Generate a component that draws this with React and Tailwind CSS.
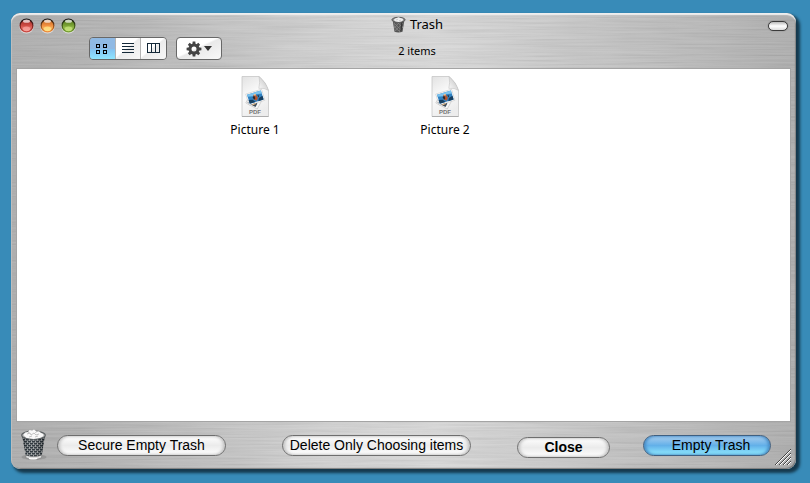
import clsx from 'clsx'

const FILES = ['Picture 1', 'Picture 2']

const LIGHTS = [
  { name: 'Close window', id: 'red', dark: '#982824', mid: '#cf4c44', light: '#f9a29c' },
  { name: 'Minimize', id: 'amber', dark: '#b85f1c', mid: '#f29040', light: '#ffe486' },
  { name: 'Zoom', id: 'green', dark: '#4c6c1a', mid: '#7aa334', light: '#c4e278' },
]

const GEAR_TEETH = [0, 45, 90, 135, 180, 225, 270, 315]

function BrushedMetal() {
  return (
    <svg className="absolute inset-0 h-full w-full" aria-hidden="true">
      <defs>
        <linearGradient id="sheen" x1="0" x2="1" y1="0" y2="0">
          <stop offset="0" stopColor="#acacac" />
          <stop offset="0.14" stopColor="#b4b4b4" />
          <stop offset="0.4" stopColor="#d2d2d2" />
          <stop offset="0.54" stopColor="#dadada" />
          <stop offset="0.75" stopColor="#c4c4c4" />
          <stop offset="1" stopColor="#acacac" />
        </linearGradient>
        <filter id="brush" x="0" y="0" width="100%" height="100%">
          <feTurbulence type="fractalNoise" baseFrequency="0.012 0.55" numOctaves="3" seed="4" />
          <feColorMatrix values="0.9 0 0 0 0.05  0.9 0 0 0 0.05  0.9 0 0 0 0.05  0 0 0 0 0.14" />
        </filter>
      </defs>
      <rect width="100%" height="100%" fill="url(#sheen)" />
      <rect width="100%" height="100%" filter="url(#brush)" />
    </svg>
  )
}

function TrafficLight({ light }) {
  return (
    <button type="button" aria-label={light.name} className="h-4 w-[15px]">
      <svg width="15" height="16" viewBox="0 0 15 16">
        <defs>
          <linearGradient id={`light-${light.id}`} x1="0" x2="0" y1="0" y2="1">
            <stop offset="0" stopColor={light.dark} />
            <stop offset="0.5" stopColor={light.mid} />
            <stop offset="1" stopColor={light.light} />
          </linearGradient>
          <linearGradient id={`rim-${light.id}`} x1="0" x2="0" y1="0" y2="1">
            <stop offset="0" stopColor="#111" />
            <stop offset="0.7" stopColor={light.dark} />
            <stop offset="1" stopColor={light.mid} />
          </linearGradient>
        </defs>
        <circle cx="7.5" cy="8.3" r="7.2" fill="#dcdcdc" />
        <circle cx="7.5" cy="7.5" r="6.4" fill={`url(#light-${light.id})`} stroke={`url(#rim-${light.id})`} strokeWidth="1.3" />
        <ellipse cx="7.5" cy="3.2" rx="3.5" ry="1.6" fill="#fff" opacity="0.7" />
        <ellipse cx="7.5" cy="10.8" rx="3.6" ry="2.3" fill={light.light} opacity="0.8" />
      </svg>
    </button>
  )
}

function ViewButton({ label, active, children }) {
  return (
    <button
      type="button"
      aria-label={label}
      aria-pressed={active}
      className={clsx(
        'flex flex-1 items-center justify-center border-r border-[#b4b4b4] last:border-r-0',
        active
          ? 'bg-linear-to-b from-[#8fb9e4] from-50% via-[#84c4f2] via-55% to-[#8fe6ff]'
          : 'bg-linear-to-br from-white from-45% via-[#ececec] via-50% to-[#f7f7f7]',
      )}
    >
      {children}
    </button>
  )
}

function GearIcon() {
  return (
    <svg width="16" height="16" viewBox="0 0 16 16" fill="#444">
      {GEAR_TEETH.map((angle) => (
        <path key={angle} d="M6.3 4L6.7 .6h2.6L9.7 4z" transform={`rotate(${angle} 8 8)`} />
      ))}
      <circle cx="8" cy="8" r="4" fill="none" stroke="#444" strokeWidth="3" />
    </svg>
  )
}

function SmallTrash() {
  return (
    <svg width="16" height="17" viewBox="0 0 16 17" aria-hidden="true">
      <path d="M1.5 3.5h12l-2 12.2q-4 1.4-8 0z" fill="#555" />
      <path d="M3 7l8 8M3 10l6 6M6 6l6 6M12 7l-8 8M9 6l-6 6M13 9l-5 6" stroke="#8a8a8a" strokeWidth="0.7" />
      <path d="M3 5l1.2 9.5M6 6v9M9 6v9" stroke="#777" strokeWidth="0.7" />
      <path d="M11 5l-1 10" stroke="#333" strokeWidth="1.2" />
      <ellipse cx="7.5" cy="3.8" rx="6.6" ry="2.5" fill="#888" stroke="#5c5c5c" />
      <path d="M2.6 4l1.4-1.4L5.5 2l2-.8 2 .7 2 .5L12.4 4l-2 1.4-2.6.5-3.2-.4z" fill="#eee" />
      <path d="M5 4l2-.8M8 4.8l2-.8" stroke="#bbb" strokeWidth="0.6" />
    </svg>
  )
}

function TrashCan() {
  return (
    <svg width="27" height="32" viewBox="0 0 27 32" aria-hidden="true">
      <defs>
        <pattern id="mesh" width="4" height="4" patternUnits="userSpaceOnUse">
          <rect width="4" height="4" fill="#999d9f" />
          <path d="M0 0h3v1.6H0zM2 2h2v1.6H2zM0 2h1v1.6H0z" fill="#1a242b" />
        </pattern>
        <linearGradient id="canShade">
          <stop offset="0" stopColor="#000" stopOpacity="0.3" />
          <stop offset="0.4" stopColor="#fff" stopOpacity="0.1" />
          <stop offset="1" stopColor="#000" stopOpacity="0.35" />
        </linearGradient>
      </defs>
      <ellipse cx="14" cy="28" rx="12.5" ry="3" fill="#666" opacity="0.3" />
      <path d="M2 6h23l-3.5 22q-8 4-15.5 0z" fill="url(#mesh)" />
      <path d="M2 6h23l-3.5 22q-8 4-15.5 0z" fill="url(#canShade)" />
      <path d="M5.6 26.2q8 3 16.2 0l-.4 2.6q-7.6 3.6-15.3 0z" fill="#ddd" stroke="#777" strokeWidth="0.5" />
      <path d="M9 29.3q4 1.2 8 0" stroke="#fff" strokeWidth="1.4" fill="none" />
      <ellipse cx="13.5" cy="6.2" rx="11.8" ry="4" fill="#bbb" stroke="#5e6365" strokeWidth="1.2" />
      <path d="M3.5 6L5 3.5l3-.6L9.5 1l2.6.6L14 .6l2.5 2 2.6-.4 1.5 1.6L23 5l.4 2-3.6 2-6.2 1-7-1z" fill="#f8f8f8" />
      <path d="M7 5l3-1 1 2 3-2 2 2 3-1M9 8l3-1M15 8l3-1M8 3l1.5 1M16.5 2.6L15.4 4" stroke="#b4b4b4" strokeWidth="0.8" fill="none" />
    </svg>
  )
}

function PdfIcon() {
  return (
    <svg width="30" height="43" viewBox="0 0 30 43" aria-hidden="true">
      <defs>
        <linearGradient id="paper" x1="0" x2="0.4" y1="0" y2="1">
          <stop offset="0" stopColor="#e2e2e2" />
          <stop offset="0.5" stopColor="#fafafa" />
          <stop offset="1" stopColor="#ededed" />
        </linearGradient>
        <linearGradient id="fold" x1="0" x2="1" y1="1" y2="0">
          <stop offset="0" stopColor="#fff" />
          <stop offset="0.55" stopColor="#d8d8d8" />
          <stop offset="1" stopColor="#aaa" />
        </linearGradient>
      </defs>
      <path d="M2 1.5h17q7 6 9.5 14v26H2z" fill="url(#paper)" stroke="#c6c6c6" strokeWidth="0.8" />
      <path d="M2 41.5h26.5" stroke="#a5a5a5" strokeWidth="0.8" />
      <path d="M19 1.5q1.4 6-.2 11.8 5.7-.8 9.7 2.2Q26 7 19 1.5z" fill="url(#fold)" stroke="#bbb" strokeWidth="0.5" />
      <g transform="rotate(28 13 25)">
        <path d="M8 20h13v11H8z" fill="#f6f6f6" stroke="#aaa" strokeWidth="0.4" />
        <path d="M9.5 26h9v4h-9z" fill="#3b4a58" />
      </g>
      <g transform="rotate(-17 15 22)">
        <path d="M7 16.5h16.5v11.5H7z" fill="#fff" stroke="#b5b5b5" strokeWidth="0.4" />
        <path d="M8 17.5h14.5v9.5H8z" fill="#2f80c0" />
        <path d="M8 17.5h14.5v3.2l-5.5-1-4 1-5-1z" fill="#7cc3ee" />
        <path d="M8 23l4 1 2 3H8zM17 27l1.5-3 4-1v4z" fill="#173e60" />
        <path d="M14 19.5h2.4l1.2 4-2 2.6-2.4-2z" fill="#b7552f" />
        <path d="M12.6 21.5l2-.9.4 2.7-1.6 1zM17.8 21l1.6.8-1.2 1.8z" fill="#282a30" />
        <path d="M14.8 19h1.6v1.6h-1.6z" fill="#eecb9b" />
      </g>
      <path d="M12 30l4-1.5" stroke="#e6b884" />
      <text x="15" y="38.6" textAnchor="middle" fontSize="6" fontWeight="bold" fill="#777" fontFamily="Liberation Sans, sans-serif">
        PDF
      </text>
    </svg>
  )
}

function PillButton({ primary, className, children }) {
  return (
    <button
      type="button"
      className={clsx(
        'h-[21px] shrink-0 rounded-full border text-sm leading-[19px] whitespace-nowrap text-black',
        primary
          ? 'border-[#3f5f80] bg-linear-to-b from-[#a9cdee] via-[#62b0e9] via-50% to-[#93edff] shadow-[inset_2px_0_3px_#4a8fc8,inset_-2px_0_3px_#4a8fc8]'
          : 'border-[#6e6e6e] bg-linear-to-b from-white via-[#ebebeb] via-50% to-white shadow-[inset_2px_0_3px_#c4c4c4,inset_-2px_0_3px_#c4c4c4]',
        className,
      )}
    >
      {children}
    </button>
  )
}

export default function App() {
  return (
    <div className="flex h-screen bg-[#388bb8] pt-[13px] pr-[14px] pb-[14px] pl-[11px] font-['Noto_Sans',sans-serif] text-black">
      <div className="relative isolate flex min-w-0 flex-1 flex-col rounded-[9px] shadow-[3px_3px_3px_1px_#15394d]">
        <div className="absolute inset-0 -z-10 overflow-hidden rounded-[9px]">
          <BrushedMetal />
          <div className="absolute inset-0 rounded-[9px] shadow-[inset_0_2px_1px_#eeeeee,inset_1px_0_1px_#b8b8b8,inset_-1px_-1px_1px_#777777]" />
        </div>

        {/* Title bar and toolbar */}
        <header className="grid h-14 shrink-0 grid-cols-[1fr_auto_1fr] pl-[27px]">
          <div className="-ml-[19px] flex flex-col gap-[3px] pt-[5px]">
            <div className="flex gap-[6px]">
              {LIGHTS.map((light) => (
                <TrafficLight key={light.id} light={light} />
              ))}
            </div>
            <div className="flex gap-[9px] pl-[70px]">
              <div className="flex h-[23px] w-[78px] overflow-hidden rounded-[4px] border border-[#686868]">
                <ViewButton label="Icon view" active>
                  <svg width="12" height="10" fill="none" stroke="#000" shapeRendering="crispEdges">
                    <path d="M.5.5h3v3h-3zM7.5.5h3v3h-3zM.5 6.5h3v3h-3zM7.5 6.5h3v3h-3z" strokeWidth="1.2" />
                  </svg>
                </ViewButton>
                <ViewButton label="List view">
                  <svg width="12" height="11" stroke="#142838" shapeRendering="crispEdges">
                    <path d="M0 .5h12M0 3.5h12M0 6.5h12M0 9.5h12" />
                  </svg>
                </ViewButton>
                <ViewButton label="Column view">
                  <svg width="14" height="11" fill="none" stroke="#142838" shapeRendering="crispEdges">
                    <path d="M.5.5h12v9H.5zM4.5 0v10M8.5 0v10" />
                  </svg>
                </ViewButton>
              </div>
              <button
                type="button"
                aria-label="Actions"
                className="flex h-[23px] w-[46px] items-center justify-center gap-[2px] rounded-[4px] border border-[#686868] bg-linear-to-br from-white from-45% via-[#e9e9e9] via-50% to-[#f8f8f8]"
              >
                <GearIcon />
                <svg width="8" height="5" fill="#333">
                  <path d="M0 0h8L4 5z" />
                </svg>
              </button>
            </div>
          </div>

          <div className="flex flex-col items-center gap-[11px] pt-[2px]">
            <h1 className="flex items-center gap-[3px] text-[13px] leading-[18px]">
              <SmallTrash />
              Trash
            </h1>
            <p className="text-[11px] leading-[14px]">2 items</p>
          </div>

          <div className="flex items-start justify-end pt-2 pr-2">
            <button
              type="button"
              aria-label="Toggle toolbar"
              className="h-[10px] w-5 rounded-full border border-[#3a3a3a] bg-linear-to-b from-[#bbb] via-white to-[#ddd] shadow-[0_0_1px_#555555]"
            />
          </div>
        </header>

        {/* Files */}
        <main className="mx-[6px] min-h-0 flex-1 bg-white shadow-[0_0_0_1px_#a4a4a4]">
          <ul className="flex pt-[6px] pl-[143px]">
            {FILES.map((file) => (
              <li key={file} className="flex w-[190px] flex-col items-center text-xs leading-4">
                <PdfIcon />
                <span className="pt-1">{file}</span>
              </li>
            ))}
          </ul>
        </main>

        {/* Actions */}
        <footer className="relative flex h-12 shrink-0 items-center justify-between pr-[25px] pl-[9px] font-['Liberation_Sans',sans-serif]">
          <div className="flex items-center gap-14">
            <div className="flex items-center gap-[10px]">
              <TrashCan />
              <PillButton className="w-[169px]">Secure Empty Trash</PillButton>
            </div>
            <PillButton className="w-[189px]">Delete Only Choosing items</PillButton>
          </div>
          <div className="flex items-center gap-[33px]">
            <PillButton className="mt-1 w-[93px] font-bold">Close</PillButton>
            <PillButton primary className="w-[128px] pl-2">
              Empty Trash
            </PillButton>
          </div>
          <svg className="absolute right-[5px] bottom-1" width="16" height="16" aria-hidden="true">
            <path d="M1 16L16 1M5 16L16 5M9 16l7-7M13 16l3-3" stroke="#fff" />
            <path d="M0 16L16 0M4 16L16 4M8 16l8-8M12 16l4-4" stroke="#444" />
          </svg>
        </footer>
      </div>
    </div>
  )
}
